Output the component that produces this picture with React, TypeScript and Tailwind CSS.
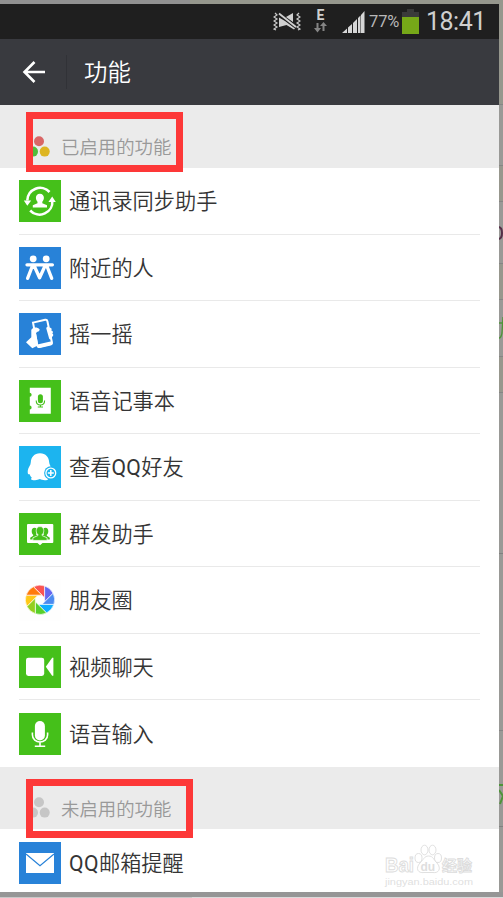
import React from 'react';

interface Feature {
  name: string;
  icon: React.ReactNode;
  color: string;
}

const SHUTTER = ['#fa5452', '#6467f0', '#4b8af0', '#10aeff', '#57cf2b', '#95cf1f', '#ffc817', '#ff7a0c'];

const SyncIcon = () => (
  <g>
    <path d="M8.3 20.5A12.8 12.8 0 0 1 30.5 12M33.3 20.5A12.8 12.8 0 0 1 11.2 30.5" fill="none" stroke="#fff" strokeWidth="2.6" />
    <path d="M4.8 20.5h7.4l-3.9 5.2zM29.4 22h7.4l-3.6-5.5z" />
    <path d="M20.9 13.8c2.6 0 4 1.8 4 4 0 1.8-.8 3-1.6 3.9v1.5l4.7 2v2.4H13.8v-2.4l4.7-2v-1.5c-.8-.9-1.6-2.1-1.6-3.9 0-2.2 1.4-4 4-4z" />
  </g>
);

const NearbyIcon = () => (
  <g>
    <circle cx="14.2" cy="11.8" r="3.4" />
    <circle cx="27.2" cy="11.8" r="3.4" />
    <path d="M8 17.8h25.4M13.6 18.5L8.6 31.4M15 18.5l5.6 12.3 5.6-12.3M27.7 18.5l5 12.9" fill="none" stroke="#fff" strokeWidth="3.3" strokeLinecap="round" strokeLinejoin="round" />
  </g>
);

const ShakeIcon = () => (
  <g>
    <path d="M14 9.6l12.2-2.8q1.8-.4 2.2 1.4l4.5 21q.4 1.8-1.4 2.2L20.6 34q-1.800.4-2.200-1.400z" fill="none" stroke="#fff" strokeWidth="2" />
    <path d="M18.4 31.6l14.2-3.4.6 2.200-1.600 1.500-12 3z" />
    <path d="M12.3 17c1-2.8 5.8-3.4 8.4-.6l-.7 1.8c-1.5.4-2.4 1-3 2l1.6 8.8-.3 3.8-5 2.4-6.3-6 5.3-5z" />
    <path d="M27.3 15.5c0-2.2 2.4-2.3 3-.7 2-.7 3 1.1 2 2.6 1.8.2 2.1 2 1 3 1.5.8 1.3 3-.5 3.5 1 1.8-1.3 3.5-2.6 1.8z" />
  </g>
);

const NotebookIcon = () => (
  <g>
    <path d="M10.8 7.8h21v26h-21v-4.3c2.4 0 2.4-4 0-4V16.7c2.4 0 2.4-4 0-4z" />
    <g className="fill-[#45c01a]">
      <rect x="18.9" y="14.3" width="5" height="9" rx="2.5" />
      <path d="M17.2 20.5c0 6 8.4 6 8.4 0M21.4 25v2M18.8 27h5.2" fill="none" stroke="#45c01a" strokeWidth="1.1" />
    </g>
  </g>
);

const QQIcon = () => (
  <g>
    <path d="M21 7.3c5.8 0 9 4 9.2 9 .1 3 2.7 4.6 2.7 8.3 0 3-.8 4.1-1.8 3.4-.8 2.2-1.6 3-2.8 3.8 2 1.2.3 2.7-2.6 2.4-2 0-3.6-.6-4.7-1.1-1.8.7-3.5 1.2-5.4 1.1-3.6 0-4.4-1.3-2.7-2.5-1.3-1-1.8-2.2-2.5-3.7-1.5 1-1.9-.8-1.6-3.4.4-3.4 3-5 3-8.3.2-5 3.4-9 9.2-9z" />
    <circle cx="31.8" cy="27" r="6.7" fill="#1cb4ef" />
    <circle cx="31.8" cy="27" r="4.9" fill="none" stroke="#fff" strokeWidth="1.3" />
    <path d="M31.8 24v6M28.8 27h6" stroke="#fff" strokeWidth="1.5" />
  </g>
);

const GroupIcon = () => (
  <g>
    <path d="M9 11h24.3q1 0 1 1v17q0 1-1 1H23.5L21 32.3 18.5 30H9q-1 0-1-1V12q0-1 1-1z" />
    <g fill="#45c01a">
      <path d="M15.5 14.8c2 0 2.8 1.4 2.8 3 0 1.4-.5 2.2-1.1 3v1l2 .8v4h-8v-1.8l3-2v-1c-.8-.8-1.5-1.6-1.5-3.6 0-2 .9-3.4 2.8-3.4zM26.5 14.8c-2 0-2.8 1.4-2.8 3 0 1.4.5 2.2 1.1 3v1l-2 .8v4h8v-1.8l-3-2v-1c.8-.8 1.5-1.6 1.5-3.6 0-2-.9-3.4-2.8-3.4z" />
      <path d="M21 13.6c2.6 0 3.8 1.9 3.8 4.1 0 1.9-.8 3-1.7 3.9v1l5 2.2v2.6H13.9v-2.6l5-2.2v-1c-.9-.9-1.7-2-1.7-3.9 0-2.2 1.2-4.1 3.8-4.1z" stroke="#fff" strokeWidth=".7" />
    </g>
  </g>
);

const MomentsIcon = () => (
  <g transform="translate(21 20.8)">
    {SHUTTER.map((c, i) => (
      <path key={c} d="M-6.5 -13.1A14.6 14.6 0 0 1 4.6 -13.9V-2z" fill={c} stroke="#fff" strokeWidth=".6" transform={`rotate(${i * 45})`} />
    ))}
  </g>
);

const VideoIcon = () => (
  <g>
    <rect x="7" y="11.7" width="18.2" height="18.2" rx="2.4" />
    <path d="M26.8 20.8L33 12q1.4-1 1.4.6v16.4q0 1.6-1.4.6z" />
  </g>
);

const MicIcon = () => (
  <g>
    <rect x="15.9" y="8" width="10" height="19.4" rx="5" />
    <path d="M13.4 19.5v2.2c0 9.7 15.2 9.7 15.2 0v-2.2M21 29v4M15.8 33.2h10.4" fill="none" stroke="#fff" strokeWidth="1.6" />
  </g>
);

const MailIcon = () => (
  <g>
    <rect x="7" y="11" width="28" height="20" />
    <path d="M7 12l14 11.8L35 12" fill="none" stroke="#2882d8" strokeWidth="1.2" />
  </g>
);

const enabled: Feature[] = [
  { name: '通讯录同步助手', icon: <SyncIcon />, color: 'bg-[#45c01a]' },
  { name: '附近的人', icon: <NearbyIcon />, color: 'bg-[#2882d8]' },
  { name: '摇一摇', icon: <ShakeIcon />, color: 'bg-[#2882d8]' },
  { name: '语音记事本', icon: <NotebookIcon />, color: 'bg-[#45c01a]' },
  { name: '查看QQ好友', icon: <QQIcon />, color: 'bg-[#1cb4ef]' },
  { name: '群发助手', icon: <GroupIcon />, color: 'bg-[#45c01a]' },
  { name: '朋友圈', icon: <MomentsIcon />, color: 'bg-[#fefefe]' },
  { name: '视频聊天', icon: <VideoIcon />, color: 'bg-[#45c01a]' },
  { name: '语音输入', icon: <MicIcon />, color: 'bg-[#45c01a]' },
];

const FeatureContent: React.FC<{ item: Feature }> = ({ item }) => (
  <>
    <div className={`h-[42px] w-[42px] shrink-0 ${item.color}`}>
      <svg viewBox="0 0 42 42" className="h-full w-full" fill="#fff">{item.icon}</svg>
    </div>
    <span className="ml-2 pt-px text-[21.2px] leading-none text-[#353535]">
      {item.name.split(/(QQ)/).map((part, i) =>
        part === 'QQ' ? <span key={i} className="font-normal tracking-[0.4px]">{part}</span> : part
      )}
    </span>
  </>
);

const SectionHeader: React.FC<{ title: string; dots: string[]; box: string }> = ({ title, dots, box }) => (
  <div className="relative flex items-center bg-[#ebebeb] pt-5 pl-[33px] text-[18.4px] leading-none text-[#999]">
    <svg width="18" height="22" viewBox="0 0 18 22">
      <circle cx="6" cy="5.3" r="5" fill={dots[0]} />
      <circle cx="0" cy="15.6" r="5" fill={dots[1]} />
      <circle cx="11.7" cy="15.6" r="5" fill={dots[2]} />
    </svg>
    <span className="ml-2.5 pt-1">{title}</span>
    <div className={`absolute left-[26px] z-10 border-[7px] border-[#fd3838] ${box}`} />
  </div>
);

const StatusBar = () => (
  <div className="flex h-[35px] shrink-0 items-center bg-[#1f1f1f] pl-[273px] text-[#cfcfcf]">
    <svg width="28" height="20" viewBox="0 0 28 20" fill="#d0d0d0">
      <path d="M2 1l2 2-3 2 3 2-3 2 3 2-3 2 3 2-3 2 2 1M26 1l-2 2 3 2-3 2 3 2-3 2 3 2-3 2 3 2-2 1" fill="none" stroke="#c8c8c8" strokeWidth="1.2" />
      <path d="M6 5.5l6 3.5 10 7.5-1 1L13.5 13 6 15zM13 5L20 1v9z" />
      <path d="M6 1.5l17 13.5" stroke="#d0d0d0" strokeWidth="1.8" />
    </svg>
    <div className="ml-[12px] flex w-[15px] flex-col items-center pb-px">
      <span className="text-[14px] leading-[13px] font-bold">E</span>
      <svg width="13" height="11" viewBox="0 0 13 11" fill="#858585">
        <path d="M2.5 1h2v5H7L3.5 10.5 0 6h2.5zM8.5 9h2V4H13L9.5 0 6 4h2.5z" />
      </svg>
    </div>
    <svg className="ml-[14px]" width="23" height="22" viewBox="0 0 23 22" fill="#d6d6d6">
      <path d="M0 22l5-4.5V22zM6 16.5l4-3.5v9H6zM11 12l4-4v14h-4zM16 7l2.5-2.5V22H16zM19 4L22.5 0v22H19z" />
    </svg>
    <span className="ml-[4px] w-[33px] pt-0.5 text-[16.5px] leading-none tracking-[-0.1px] text-[#b8b8b8]">77%</span>
    <div className="flex w-[17px] flex-col items-center">
      <div className="h-[3px] w-[7px] bg-[#3a3a3a]" />
      <div className="h-[5px] w-full bg-[#3a3a3a]" />
      <div className="h-[17px] w-full bg-[#76a818]" />
    </div>
    <span className="ml-[7px] text-[25px] leading-none tracking-[-0.5px]">18:41</span>
  </div>
);

const Watermark = () => (
  <div className="absolute right-[24px] bottom-[3px] w-[91px]">
    <svg width="91" height="47" viewBox="0 0 91 47" fill="#fff" stroke="#dcdcdc" strokeWidth=".9">
      <text x="1" y="30" fontSize="20" fontWeight="700" textLength="29" lengthAdjust="spacingAndGlyphs" fontFamily="Liberation Sans, sans-serif">Bai</text>
      <ellipse cx="34.5" cy="16" rx="3.5" ry="4.5" />
      <ellipse cx="40.5" cy="8" rx="3.5" ry="4.8" />
      <ellipse cx="48.5" cy="8" rx="3.5" ry="4.8" />
      <ellipse cx="54" cy="16" rx="3.5" ry="4.5" />
      <path d="M44.5 14c5 0 5 4 8.5 7 5 6 1 10.5-4 9.5h-9c-6 1-9-4-4-9.5 3.500-3 4-7 8.500-7z" />
      <text x="36.5" y="29" fontSize="12" fontWeight="700" fill="#dedede" stroke="none" fontFamily="Liberation Sans, sans-serif">du</text>
      <text x="58" y="28.5" fontSize="15" fontWeight="700" fontFamily="Noto Sans CJK SC, sans-serif">经验</text>
      <text x="1" y="43" fontSize="9.5" fill="#dfdfdf" stroke="none" textLength="88" lengthAdjust="spacingAndGlyphs" fontFamily="Liberation Sans, sans-serif">jingyan.baidu.com</text>
    </svg>
  </div>
);

// sliver of the dimmed page visible to the right of the screen
const Backdrop = () => (
  <div className="flex w-1 shrink-0 flex-col bg-[#999996]">
    <div className="h-[100px] bg-[#96978d]" />
    <div className="h-[61px] border-t border-[#858585]" />
    <div className="h-[37px] border-y border-[#858585] bg-[#97978d]" />
    <div className="flex h-[61px] items-center">
      <svg width="4" height="14" viewBox="0 0 4 14" fill="none" stroke="#552e48" strokeWidth="2">
        <path d="M0 1q3 1 3 6t-3 6" />
      </svg>
    </div>
    <div className="h-[37px] border-y border-[#858585] bg-[#97978d]" />
    <div className="flex h-[56px] items-center">
      <svg width="4" height="22" viewBox="0 0 4 22" fill="none" stroke="#4e9438" strokeWidth="1.3">
        <path d="M0 6h4M4 0L3 16q-1 5-3 5" />
      </svg>
    </div>
    <div className="h-[37px] border-y border-[#858585] bg-[#97978d]" />
    <div className="h-[160px]" />
    <div className="h-[177px] border-t border-[#808080]" />
    <div className="flex h-[96px] items-end border-t border-[#858585] pb-5">
      <svg width="4" height="22" viewBox="0 0 4 22" fill="none" stroke="#4e9438" strokeWidth="2">
        <path d="M0 1h4M0 6l4 6M1 20l3-8" />
      </svg>
    </div>
    <div className="flex-1 border-t border-[#808080]" />
  </div>
);

export default function App() {
  return (
    <div className="flex h-[898px] w-[503px] flex-col overflow-hidden bg-[#999996] font-[Roboto,'Noto_Sans_CJK_SC',sans-serif] font-[350]">
      <div className="flex h-1 shrink-0">
        <div className="w-[190px] bg-[#919191]" />
        <div className="flex-1 bg-[#96978d]" />
      </div>

      <div className="flex h-[888px] shrink-0">
        <div className="flex w-[499px] shrink-0 flex-col bg-white">
          <div className="font-normal"><StatusBar /></div>

          <header className="flex h-[66px] shrink-0 items-center bg-[#393a3f] text-white">
            <svg className="ml-[22px]" width="24" height="24" viewBox="0 0 24 24" fill="none" stroke="#fff" strokeWidth="2.6">
              <path d="M23 12H2.5M12.5 2L2.5 12l10 10" />
            </svg>
            <div className="ml-[20px] h-[34px] w-px bg-[#313237]" />
            <h1 className="ml-[17px] pt-[3px] text-[23.4px] leading-none font-[350]">功能</h1>
          </header>

          <div className="grid h-[63px] shrink-0">
            <SectionHeader title="已启用的功能" dots={['#d96666', '#52bb3c', '#ddb522']} box="top-[7px] h-[60px] w-[157px]" />
          </div>
          <ul className="shrink-0 px-[19px]">
            {enabled.map((item, i) => (
              <li
                key={item.name}
                className={`flex h-[66.55px] items-center pt-[0.6px] ${i < enabled.length - 1 ? 'border-b border-[#e9e9e9]' : ''}`}
              >
                <FeatureContent item={item} />
              </li>
            ))}
          </ul>

          <div className="grid h-[62px] shrink-0">
            <SectionHeader title="未启用的功能" dots={['#c6c6c6', '#c6c6c6', '#c6c6c6']} box="top-[12px] h-[59px] w-[167px]" />
          </div>
          <div className="relative flex h-[63px] shrink-0 items-center px-[19px] pt-[5px]">
            <FeatureContent item={{ name: 'QQ邮箱提醒', icon: <MailIcon />, color: 'bg-[#2882d8]' }} />
            <Watermark />
          </div>
        </div>
        <Backdrop />
      </div>

      <div className="h-[5px] shrink-0 bg-[#969696]" />
      <div className="flex h-px shrink-0">
        <div className="w-[192px] bg-[#c8c8c8]" />
        <div className="flex-1 bg-[#dadada]" />
      </div>
    </div>
  );
}
